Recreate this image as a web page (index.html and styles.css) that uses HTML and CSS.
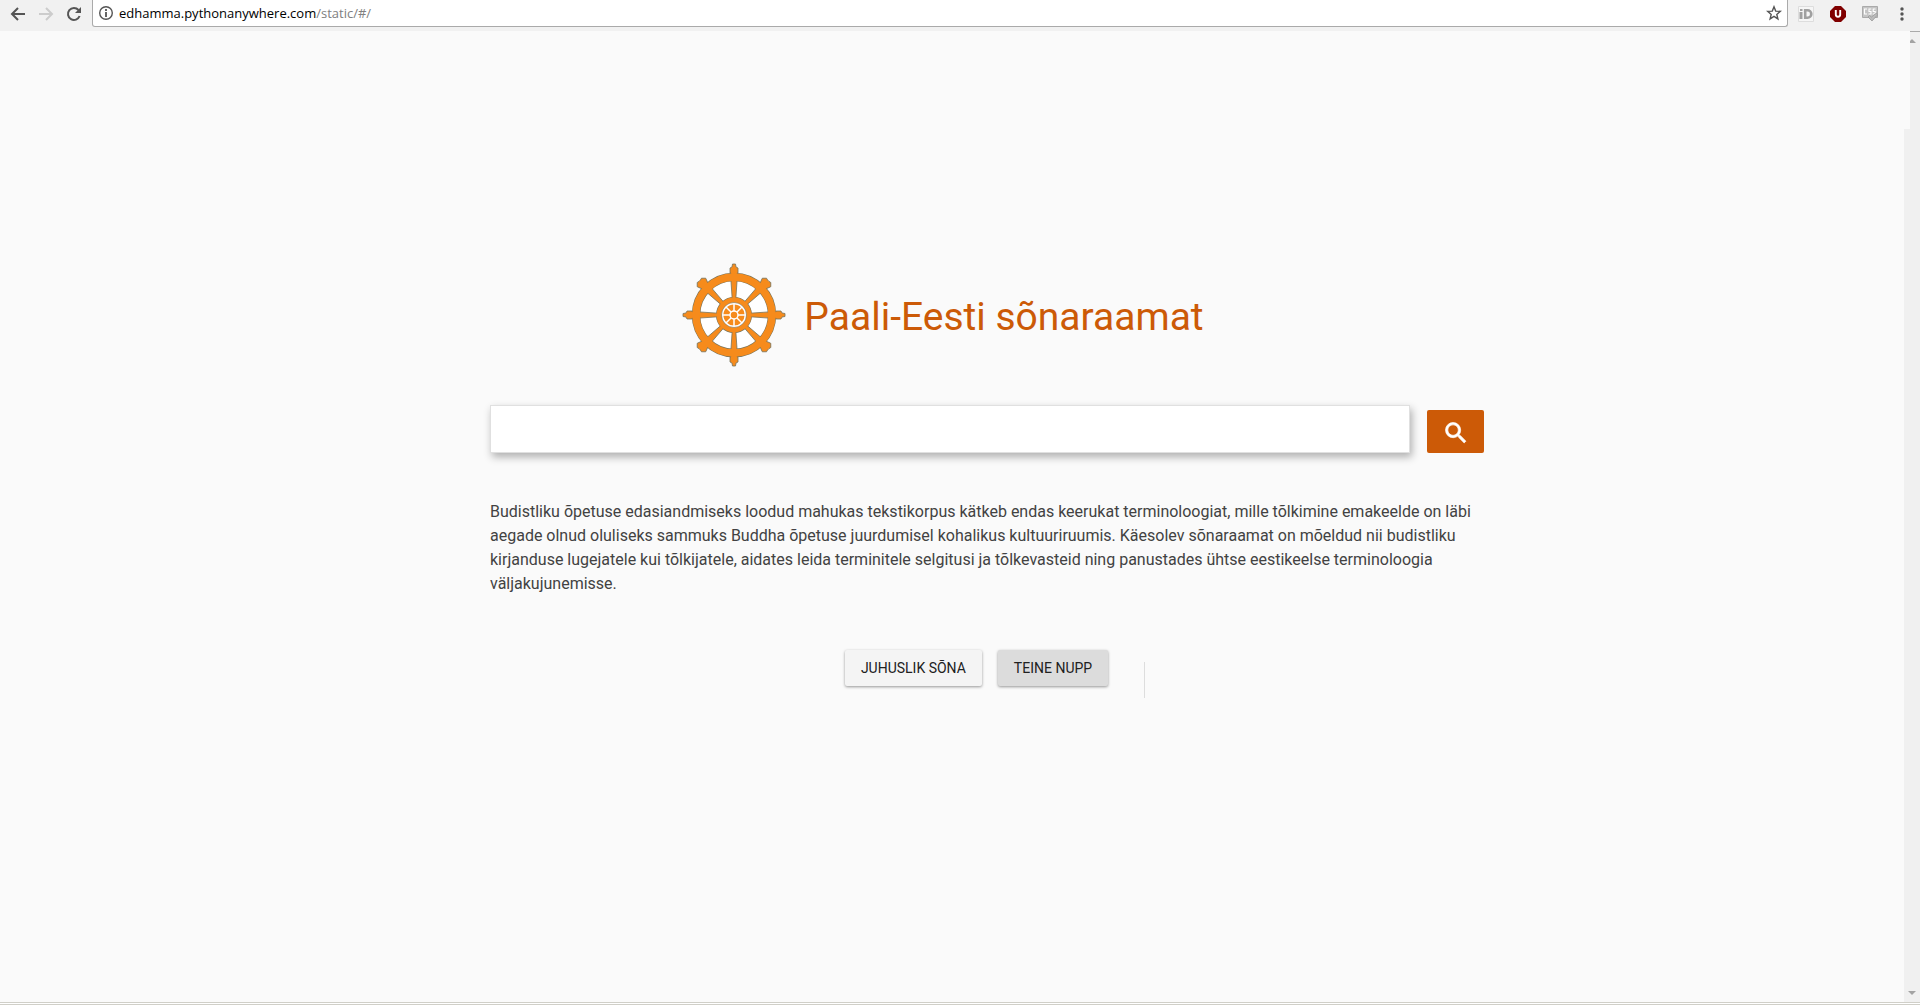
FILE: index.html
```html
<!DOCTYPE html>
<html lang="et">
<head>
<meta charset="utf-8">
<title>Paali-Eesti sõnaraamat</title>
<link rel="stylesheet" href="styles.css">
</head>
<body>
<header class="toolbar">
  <nav class="nav">
    <button class="tool" aria-label="Back"><svg width="16" height="16" viewBox="0 0 16 16"><path d="M15 8H2M8 2L2 8l6 6" fill="none" stroke="#555" stroke-width="2"/></svg></button>
    <button class="tool" aria-label="Forward"><svg width="16" height="16" viewBox="0 0 16 16"><path d="M1 8h13M8 2l6 6-6 6" fill="none" stroke="#ccc" stroke-width="2"/></svg></button>
    <button class="tool" aria-label="Reload"><svg width="16" height="16" viewBox="0 0 16 16"><path d="M13.6 10A6 6 0 1 1 12.5 4" fill="none" stroke="#555" stroke-width="2"/><path d="M15 1v6H9z" fill="#555"/></svg></button>
  </nav>
  <div class="address">
    <svg width="16" height="16" viewBox="0 0 16 16"><circle cx="8" cy="8" r="6.3" fill="none" stroke="#555" stroke-width="1.4"/><path d="M8 7v5M8 4v2" stroke="#555" stroke-width="1.8"/></svg>
    <p class="url">edhamma.pythonanywhere.com<span class="path">/static/#/</span></p>
    <button class="tool" aria-label="Bookmark"><svg width="16" height="16" viewBox="0 0 16 16"><path d="M8 1.8l1.7 4.3 4.6.3-3.5 3 1.1 4.5L8 11.4l-3.9 2.5 1.1-4.5-3.5-3 4.6-.3z" fill="none" stroke="#555" stroke-width="1.4"/></svg></button>
  </div>
  <div class="extensions">
    <button class="tool" aria-label="iD"><svg width="16" height="16" viewBox="0 0 16 16"><path d="M.5.5h15v15H.5z" fill="#f6f6f6" stroke="#ddd"/><path d="M1.500 6h3v7h-3zM2 3h2.500v2H2z" fill="#a0a0a0"/><path d="M7.200 4.200h2.300a3.800 3.800 0 0 1 0 7.600H7.200z" fill="none" stroke="#a0a0a0" stroke-width="2.600"/></svg></button>
    <button class="tool" aria-label="uBlock"><svg width="16" height="16" viewBox="0 0 16 16"><path d="M5 0h6l5 5v6l-5 5H5l-5-5V5z" fill="#800000"/><path d="M5.800 4v4.500a2.200 2.200 0 0 0 4.400 0V4" fill="none" stroke="#fff" stroke-width="1.900"/></svg></button>
    <button class="tool" aria-label="CSS"><svg width="16" height="16" viewBox="0 0 16 16"><path d="M.5.5h15v11H.5z" fill="#c4c4c4" stroke="#aaa"/><path d="M5 3H2.500v5H5M9.300 3H7v2.500h2V8H6.500M13.500 3h-2.300v2.500h2V8h-2.500" fill="none" stroke="#fff" stroke-width="1.100"/><path d="M6 11l1.500-1.500L9.500 11l5-4 1 2-5.500 6z" fill="#bbb" stroke="#999" stroke-width=".8"/></svg></button>
    <button class="tool" aria-label="Menu"><svg width="16" height="16" viewBox="0 0 16 16" fill="#555"><circle cx="8" cy="3" r="1.700"/><circle cx="8" cy="8" r="1.700"/><circle cx="8" cy="13" r="1.700"/></svg></button>
  </div>
</header>
<div class="viewport">
  <main class="page">
    <div class="column">
      <div class="brand">
        <svg width="104" height="104" viewBox="-52 -52 104 104">
          <defs>
            <path id="spoke" d="M-1.800-16L-3.300-38V-42H-4V-47L-2-48-1.500-51H1.500L2-48 4-47V-42H3.300V-38L1.800-16z"/>
            <path id="diagonal" d="M-1.800-16L-3.500-38-4.500-42-6-46-3-49-1-48.500H1L3-49 6-46 4.500-42 3.500-38 1.800-16z"/>
          </defs>
          <circle r="38" fill="#fff" stroke="#77745c" stroke-width="8.500"/>
          <circle r="15" fill="#fff" stroke="#77745c" stroke-width="6"/>
          <g fill="#f68b1c" stroke="#77745c" stroke-width=".8">
            <use href="#spoke"/><use href="#spoke" transform="rotate(90)"/><use href="#spoke" transform="rotate(180)"/><use href="#spoke" transform="rotate(270)"/>
            <use href="#diagonal" transform="rotate(45)"/><use href="#diagonal" transform="rotate(135)"/><use href="#diagonal" transform="rotate(225)"/><use href="#diagonal" transform="rotate(315)"/>
          </g>
          <g fill="none" stroke="#f68b1c"><circle r="38" stroke-width="7.500"/><circle r="15" stroke-width="5"/></g>
          <circle r="11.500" fill="#f68b1c" stroke="#fff" stroke-width="1.800"/>
          <path d="M-12 0H12M0-12V12M-8.500-8.500L8.500 8.500M-8.500 8.500L8.500-8.500" stroke="#fff" stroke-width="1.500"/>
          <circle r="4" fill="#f68b1c" stroke="#fff" stroke-width="1.500"/>
          <circle r="12.500" fill="none" stroke="#8d7650" stroke-width=".6"/>
        </svg>
        <h1 class="title">Paali-Eesti sõnaraamat</h1>
      </div>
      <form class="search">
        <input class="query" type="text" aria-label="Otsi">
        <button class="submit" type="button" aria-label="Otsi"><svg width="28" height="28" viewBox="0 0 24 24"><path fill="#fff" stroke="#fff" stroke-width=".6" d="M15.500 14h-.79l-.28-.27A6.471 6.471 0 0 0 16 9.500 6.500 6.500 0 1 0 9.500 16c1.610 0 3.090-.59 4.230-1.570l.27.28v.79l5 4.990L20.490 19l-4.990-5zm-6 0C7.010 14 5 11.990 5 9.500S7.010 5 9.500 5 14 7.010 14 9.500 11.990 14 9.500 14z"/></svg></button>
      </form>
      <p class="intro">Budistliku õpetuse edasiandmiseks loodud mahukas tekstikorpus kätkeb endas keerukat terminoloogiat, mille tõlkimine emakeelde on läbi aegade olnud oluliseks sammuks Buddha õpetuse juurdumisel kohalikus kultuuriruumis. Käesolev sõnaraamat on mõeldud nii budistliku kirjanduse lugejatele kui tõlkijatele, aidates leida terminitele selgitusi ja tõlkevasteid ning panustades ühtse eestikeelse terminoloogia väljakujunemisse.</p>
      <div class="actions">
        <button class="action">JUHUSLIK SÕNA</button>
        <button class="action pressed">TEINE NUPP</button>
        <span class="divider"></span>
      </div>
    </div>
  </main>
  <div class="scrollbar">
    <svg class="up" width="10" height="98" viewBox="0 0 10 98"><path d="M0 0h10v1H0z" fill="#aaa"/><path d="M-2 12L2 8l4 4z" fill="#a3a3a3"/></svg>
    <svg class="down" width="8" height="4" viewBox="0 0 8 4"><path d="M0 0h8L4 4z" fill="#a3a3a3"/></svg>
  </div>
</div>
<footer class="edge"></footer>
</body>
</html>
```
FILE: styles.css
```css
* { box-sizing: border-box; }
body {
  margin: 0;
  min-height: 100vh;
  display: flex;
  flex-direction: column;
  background: #fafafa;
  color: #424242;
  font-family: Roboto, "Liberation Sans", sans-serif;
}
button { border: 0; font-family: inherit; }
svg { display: block; flex: none; }
.toolbar {
  display: flex;
  height: 31px;
  padding-bottom: 4px;
  background: #f1f1f1;
}
.nav { display: flex; align-items: center; gap: 12px; padding: 0 10px; }
.tool { padding: 0; background: none; }
.address {
  flex: 1;
  display: flex;
  align-items: center;
  gap: 5px;
  padding: 0 5px;
  background: #fff;
  border: 1px solid #aaa;
  border-top: 0;
  border-radius: 0 0 3px 3px;
}
.url {
  flex: 1;
  margin: 0;
  color: #000;
  font: 13px/18px "Open Sans", sans-serif;
}
.path { color: #808080; }
.extensions { display: flex; align-items: center; gap: 16px; padding: 0 10px; }
.viewport { flex: 1; display: flex; }
.page {
  flex: 1;
  display: flex;
  justify-content: center;
  padding: 232px 0 0 70px;
}
.column { width: 994px; max-width: 100%; }
.brand {
  display: flex;
  justify-content: center;
  align-items: center;
  gap: 18px;
  padding-right: 88px;
}
.title {
  margin: 0;
  padding-top: 4px;
  color: #cc5a07;
  font-size: 39px;
  font-weight: 400;
  line-height: 48px;
}
.search { display: flex; align-items: flex-end; gap: 17px; margin-top: 38px; }
.query {
  flex: 1;
  height: 48px;
  padding: 0 12px;
  background: #fff;
  border: 1px solid #e0e0e0;
  font-size: 16px;
  box-shadow: 2px 4px 8px rgba(0, 0, 0, .3);
}
.submit {
  width: 57px;
  height: 43px;
  display: flex;
  align-items: center;
  justify-content: center;
  padding: 3px 0 0;
  border-radius: 2px;
  background: #cc5a07;
}
.intro { margin: 47px 0 0; font-size: 16px; line-height: 24px; }
.actions {
  display: flex;
  justify-content: center;
  gap: 16px;
  margin-top: 54px;
  padding-left: 16px;
}
.action {
  height: 36px;
  padding: 0 16px;
  border-radius: 2px;
  background: #f4f4f4;
  color: #212121;
  font-size: 14px;
  line-height: 36px;
  box-shadow: 0 1px 3px rgba(0, 0, 0, .4);
}
.pressed { background: #dcdcdc; }
.divider {
  width: 1px;
  height: 36px;
  margin: 12px 0 0 20px;
  background: #ddd;
}
.scrollbar {
  width: 16px;
  display: flex;
  flex-direction: column;
  align-items: center;
  justify-content: space-between;
  background: linear-gradient(#fafafa 98px, #f0f0f0 98px);
}
.up { align-self: flex-end; background: #f0f0f0; }
.down { margin-bottom: 7px; }
.edge {
  height: 3px;
  background: #fff;
  border: solid #d0cfc8;
  border-width: 1px 0;
}
```
